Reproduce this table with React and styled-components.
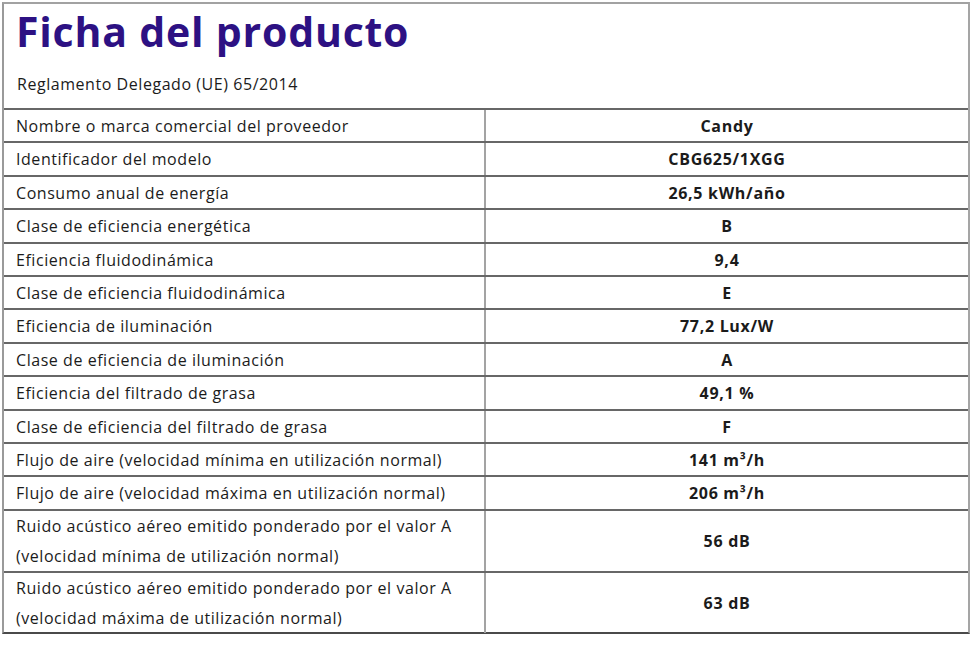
import React from "react";
import styled, { createGlobalStyle } from "styled-components";

const Global = createGlobalStyle`
  html, body { margin: 0; padding: 0; background: #fff; }
  body { font-family: "Open Sans", Lato, "Liberation Sans", sans-serif; color: #1b1b1b; }
`;

const Sheet = styled.div`
  box-sizing: border-box;
  margin: 2px 0 0 2px;
  width: 968px;
  border-top: 2px solid #a2a2a2;
  border-left: 2px solid #9a9a9a;
  border-right: 2px solid #a5a5a5;
  border-bottom: 2px solid #4a4a4a;
`;

const Header = styled.header`
  box-sizing: border-box;
  height: 104px;
  padding: 0 12px;
  display: flex;
  flex-direction: column;
`;

const Title = styled.h1`
  margin: 2px 0 0;
  font-family: "Open Sans", Lato, sans-serif;
  font-weight: 700;
  font-size: 41px;
  line-height: 50px;
  color: #2d1183;
  letter-spacing: 0.8px;
`;

const Subtitle = styled.p`
  margin: 17px 0 0 1px;
  font-size: 16px;
  letter-spacing: 0.55px;
  line-height: 22px;
`;

const Row = styled.div`
  display: grid;
  grid-template-columns: 482px 1fr;
  height: ${(p) => p.$h}px;
  border-top: 2px solid #676767;
  box-sizing: border-box;
`;

const Label = styled.div`
  box-sizing: border-box;
  padding-left: 12px;
  border-right: 2px solid #a3a3a3;
  display: flex;
  align-items: center;
  font-size: 16px;
  letter-spacing: 0.55px;
  line-height: ${(p) => (p.$tall ? "30px" : "22px")};
`;

const Value = styled.div`
  display: flex;
  align-items: center;
  justify-content: center;
  font-weight: 700;
  font-size: 16px;
  letter-spacing: 0.7px;
`;

const rows = [
  ["Nombre o marca comercial del proveedor", "Candy"],
  ["Identificador del modelo", "CBG625/1XGG"],
  ["Consumo anual de energía", "26,5 kWh/año"],
  ["Clase de eficiencia energética", "B"],
  ["Eficiencia fluidodinámica", "9,4"],
  ["Clase de eficiencia fluidodinámica", "E"],
  ["Eficiencia de iluminación", "77,2 Lux/W"],
  ["Clase de eficiencia de iluminación", "A"],
  ["Eficiencia del filtrado de grasa", "49,1 %"],
  ["Clase de eficiencia del filtrado de grasa", "F"],
  ["Flujo de aire (velocidad mínima en utilización normal)", "141 m³/h"],
  ["Flujo de aire (velocidad máxima en utilización normal)", "206 m³/h"],
];

const tallRows = [
  [
    "Ruido acústico aéreo emitido ponderado por el valor A",
    "(velocidad mínima de utilización normal)",
    "56 dB",
  ],
  [
    "Ruido acústico aéreo emitido ponderado por el valor A",
    "(velocidad máxima de utilización normal)",
    "63 dB",
  ],
];

export default function App() {
  return (
    <>
      <Global />
      <Sheet>
        <Header>
          <Title>Ficha del producto</Title>
          <Subtitle>Reglamento Delegado (UE) 65/2014</Subtitle>
        </Header>
        {rows.map(([l, v], i) => (
          <Row key={i} $h={i % 5 === 1 || i % 5 === 3 ? 34 : 33}>
            <Label>{l}</Label>
            <Value>{v}</Value>
          </Row>
        ))}
        {tallRows.map(([a, b, v], i) => (
          <Row key={"t" + i} $h={i === 0 ? 62 : 61}>
            <Label $tall>
              {a}
              <br />
              {b}
            </Label>
            <Value>{v}</Value>
          </Row>
        ))}
      </Sheet>
    </>
  );
}
